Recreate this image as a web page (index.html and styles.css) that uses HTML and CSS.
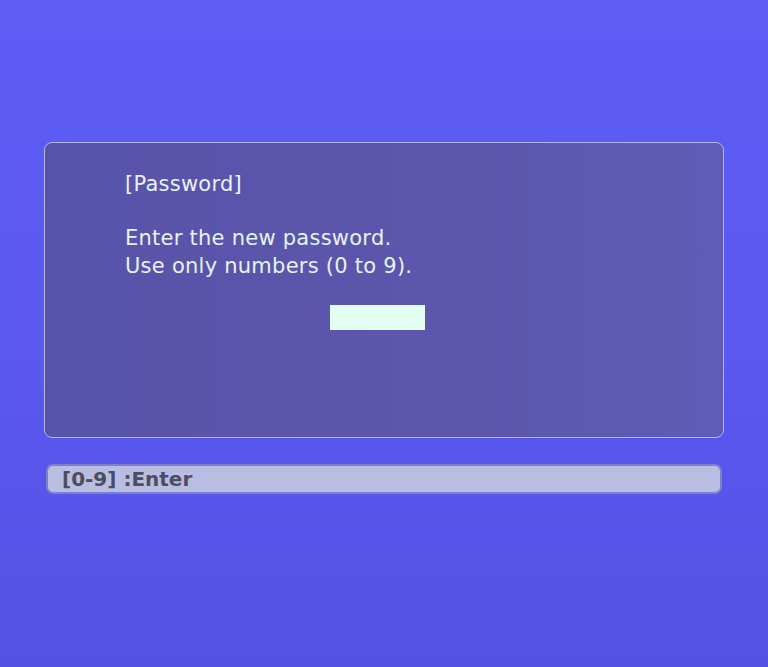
FILE: index.html
```html
<!DOCTYPE html>
<html>
<head>
<meta charset="utf-8">
<link rel="stylesheet" href="styles.css">
</head>
<body>
<div class="screen">
  <div class="panel">
    <div class="title">[Password]</div>
    <div class="msg">
      <div>Enter the new password.</div>
      <div>Use only numbers (0 to 9).</div>
    </div>
    <div class="field-row"><div class="field"></div></div>
  </div>
  <div class="bar">[0-9] :Enter</div>
</div>
</body>
</html>
```
FILE: styles.css
```css
html, body {
  margin: 0;
  padding: 0;
}
body {
  width: 768px;
  height: 667px;
  overflow: hidden;
  background: linear-gradient(180deg, #5d5cf4 0%, #5a59f0 50%, #5352e6 100%);
  font-family: "DejaVu Sans", "Noto Sans", sans-serif;
}
.screen {
  padding: 142px 44px 0 44px;
  display: flex;
  flex-direction: column;
}
.panel {
  width: 680px;
  height: 296px;
  box-sizing: border-box;
  border: 1.5px solid #b4b6e6;
  border-radius: 8px;
  background: linear-gradient(90deg, #5853aa 0%, #5c57ac 60%, #605bb6 100%);
  padding: 27px 0 0 80px;
  color: #e6f2f2;
  font-size: 21px;
  letter-spacing: 0.25px;
}
.title {
  line-height: 28px;
}
.msg {
  margin-top: 26px;
  line-height: 28px;
}
.field-row {
  display: flex;
  padding-left: 205px;
  margin-top: 25px;
}
.field {
  width: 95px;
  height: 25px;
  background: #e2fff2;
}
.bar {
  margin: 26px 2px 0 2px;
  height: 30px;
  box-sizing: border-box;
  border: 2px solid #7d7fc8;
  border-radius: 7px;
  background: #b9bde2;
  color: #4c4d60;
  font-weight: bold;
  font-size: 20px;
  line-height: 26px;
  padding-left: 14px;
  font-family: "DejaVu Sans", sans-serif;
}
```
